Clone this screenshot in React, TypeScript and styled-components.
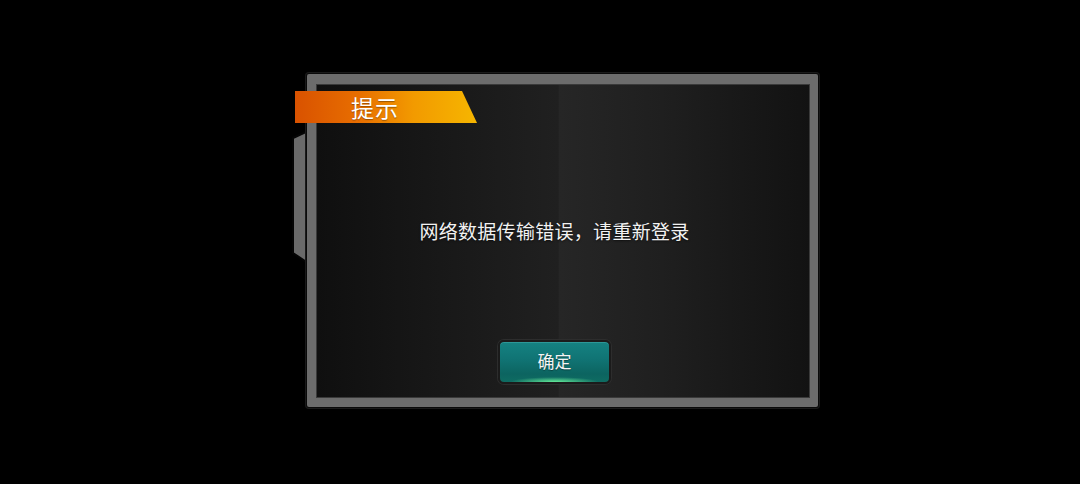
import React from 'react';
import styled, { createGlobalStyle } from 'styled-components';

const GlobalStyle = createGlobalStyle`
  html, body {
    margin: 0;
    padding: 0;
    background: #000;
  }
  body {
    font-family: "Noto Sans CJK SC", "Noto Sans", sans-serif;
  }
`;

const Page = styled.div`
  width: 1080px;
  height: 484px;
  background: #000;
  display: flex;
  align-items: flex-start;
  padding: 74px 0 0 290px;
  box-sizing: border-box;
`;

const Dialog = styled.div`
  position: relative;
  display: flex;
  align-items: flex-start;
`;

const SideTab = styled.svg`
  display: block;
  width: 20px;
  height: 134px;
  margin-top: 56px;
  margin-right: -3px;
  flex-shrink: 0;
`;

const Frame = styled.div`
  position: relative;
  width: 511px;
  height: 333px;
  box-sizing: border-box;
  padding: 10px 8px 9px 9px;
  background: #6c6c6c;
  border-radius: 2px;
  box-shadow: 0 0 0 1px #0a0a0a, 0 0 0 2px #1a1a1a;
`;

const Inner = styled.div`
  width: 100%;
  height: 100%;
  box-sizing: border-box;
  background: linear-gradient(
    90deg,
    #0f0f0f 0%,
    #181818 25%,
    #202020 49%,
    #262626 49.3%,
    #1f1f1f 70%,
    #121212 100%
  );
  box-shadow: inset 0 0 0 1px #3a3a3a;
  display: flex;
  flex-direction: column;
  align-items: center;
  padding: 0 17px 0 0;
`;

const Banner = styled.div`
  position: absolute;
  left: -12px;
  top: 17px;
  width: 182px;
  height: 32px;
  clip-path: polygon(0 0, 167px 0, 182px 32px, 0 32px);
  background: linear-gradient(90deg, #d95200 0%, #e86e00 35%, #f29a00 65%, #f6b600 100%);
  display: flex;
  align-items: center;
  padding-left: 56px;
  box-sizing: border-box;
  color: #fff;
  font-size: 23px;
  line-height: 1;
  letter-spacing: 1px;
  text-shadow: 0 1px 1px rgba(0, 0, 0, 0.35);
`;

const Message = styled.div`
  margin-top: 135px;
  color: #f2f2f2;
  font-size: 19px;
  letter-spacing: 0.3px;
  line-height: 24px;
  text-shadow: 0 1px 2px rgba(0, 0, 0, 0.6);
`;

const ConfirmButton = styled.button`
  margin-top: 97px;
  width: 113px;
  height: 44px;
  box-sizing: border-box;
  border: 2px solid #1b1b1b;
  border-radius: 6px;
  background:
    radial-gradient(ellipse 44px 5px at 50% 100%, rgba(110, 250, 160, 0.9), rgba(60, 210, 140, 0) 100%),
    linear-gradient(180deg, #158282 0%, #107373 45%, #0c6460 80%, #0f6c62 100%);
  box-shadow: 0 0 0 1px #2d2d2d, inset 0 1px 0 rgba(120, 220, 220, 0.25);
  color: #f4f4f4;
  font-family: "Noto Sans CJK SC", "Noto Sans", sans-serif;
  font-size: 17px;
  line-height: 1;
  padding: 0 0 3px;
  cursor: pointer;
  text-shadow: 0 1px 1px rgba(0, 0, 0, 0.4);
`;

export default function App() {
  return (
    <>
      <GlobalStyle />
      <Page>
        <Dialog>
          <SideTab viewBox="0 0 20 134">
            <polygon
              points="3,8 18,1 20,1 20,133 18,133 3,123"
              fill="#6a6a6a"
              stroke="#050505"
              strokeWidth="2"
            />
          </SideTab>
          <Frame>
            <Inner>
              <Message>网络数据传输错误，请重新登录</Message>
              <ConfirmButton>确定</ConfirmButton>
            </Inner>
            <Banner>提示</Banner>
          </Frame>
        </Dialog>
      </Page>
    </>
  );
}
